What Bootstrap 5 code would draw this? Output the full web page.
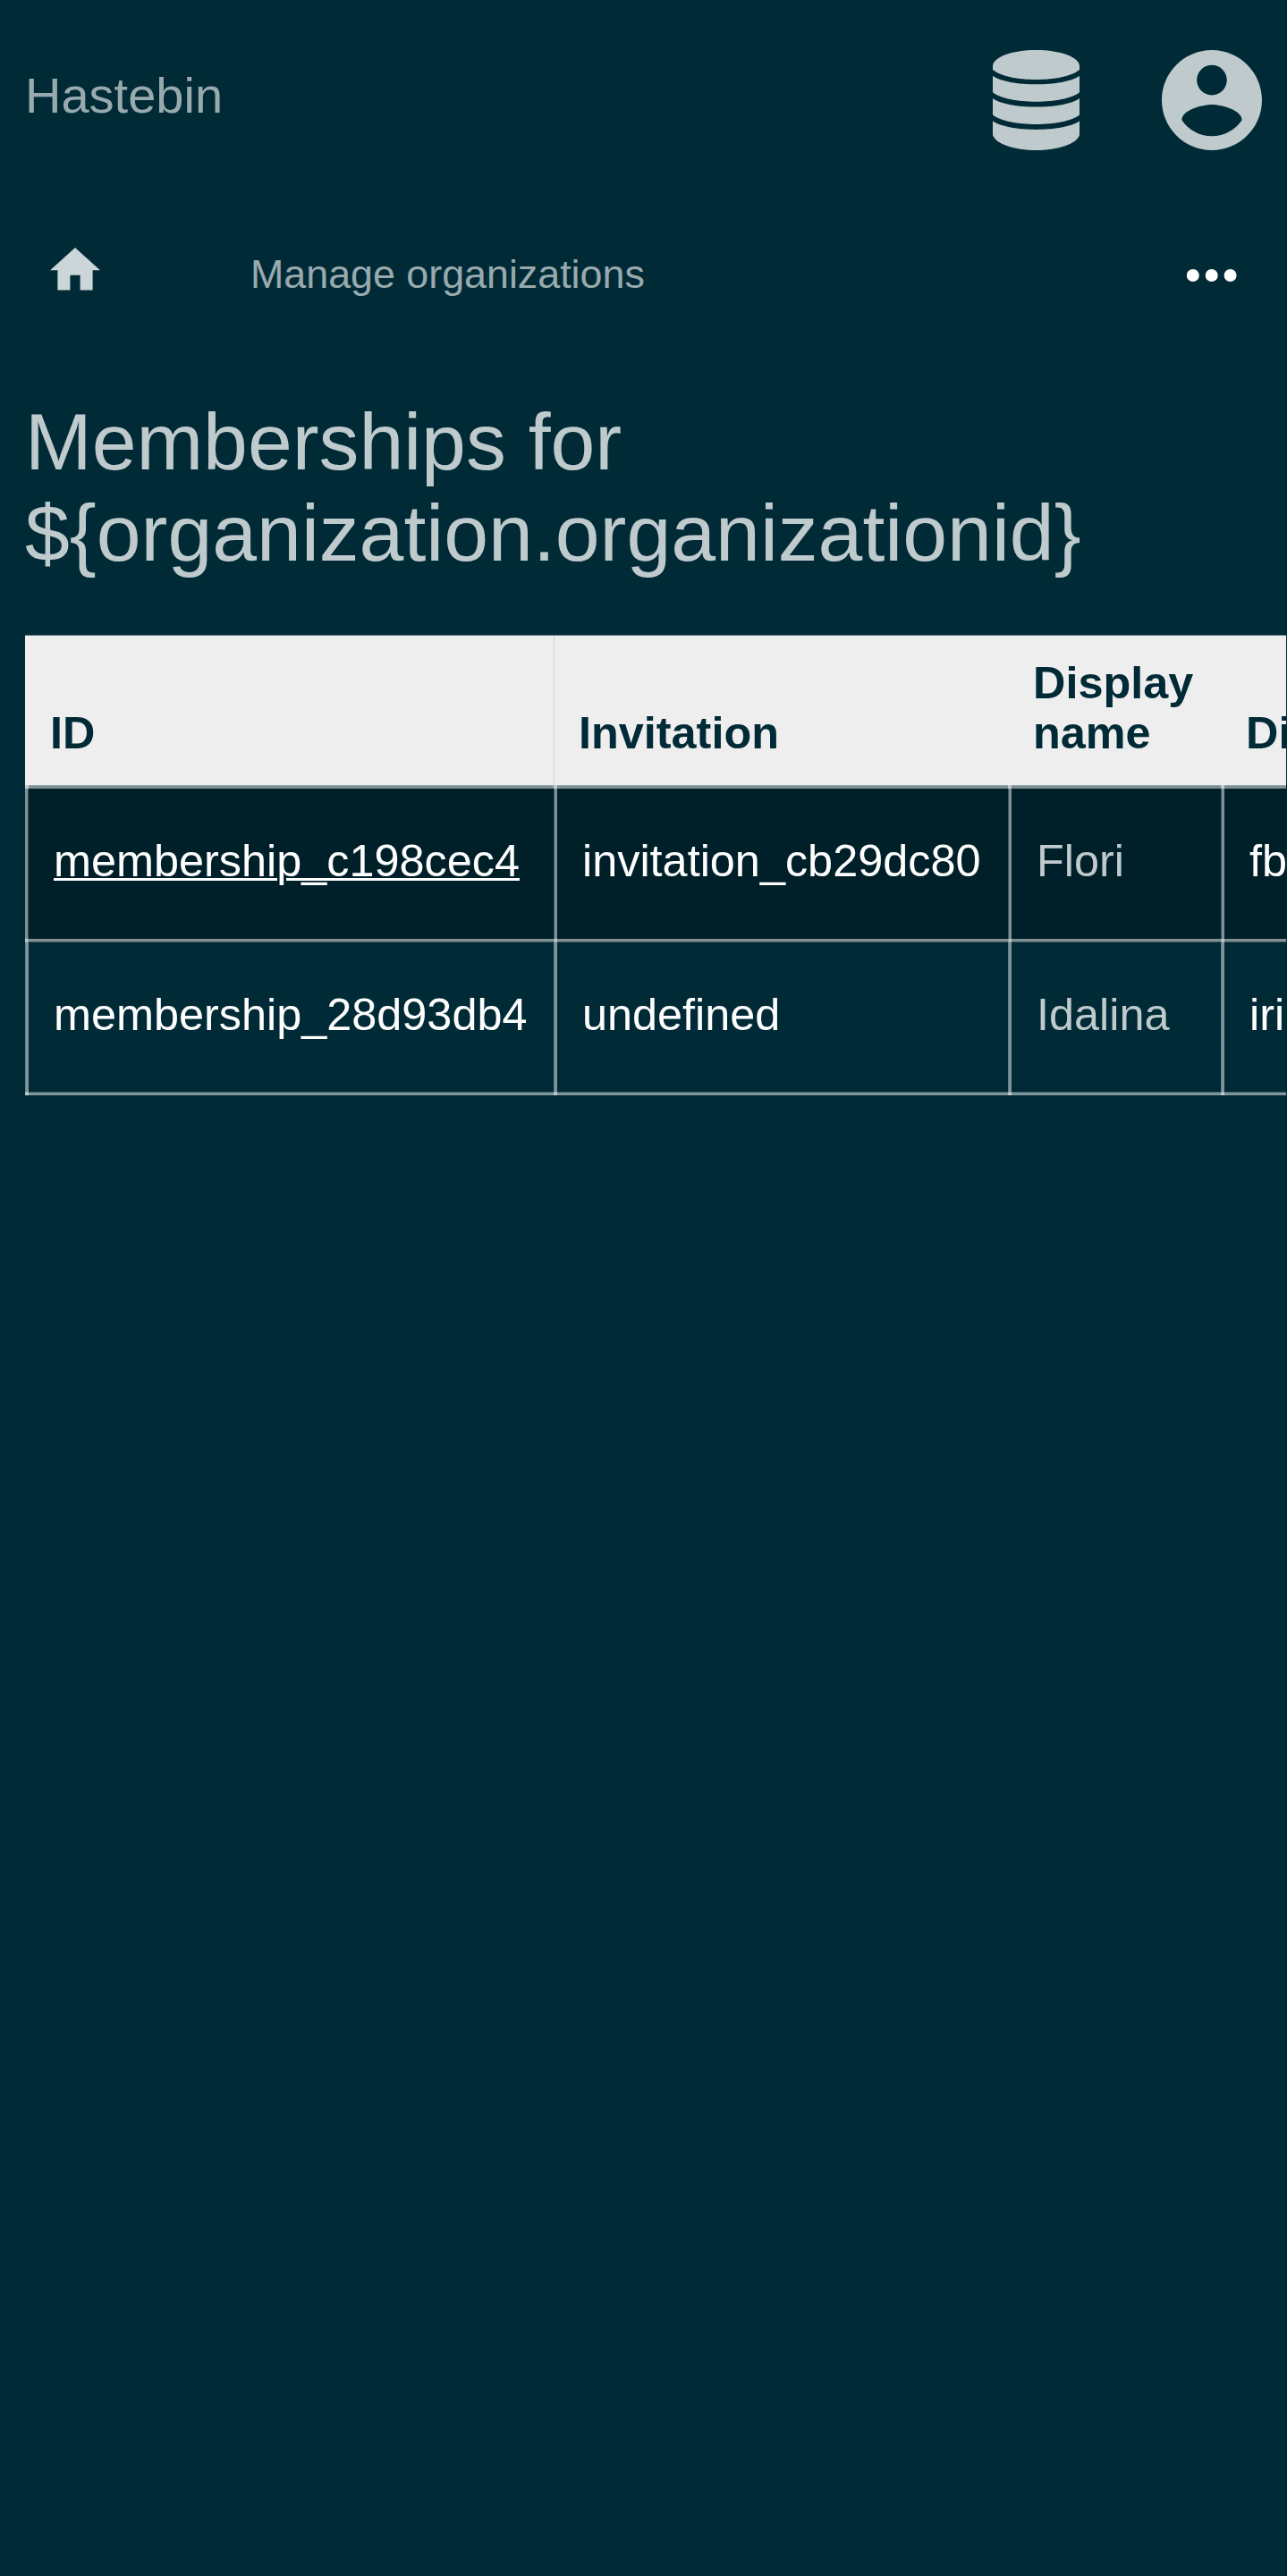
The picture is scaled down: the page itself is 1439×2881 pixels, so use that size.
<!DOCTYPE html>
<html lang="en">
<head>
<meta charset="utf-8">
<meta name="viewport" content="width=device-width, initial-scale=1">
<title>Hastebin</title>
<link href="https://cdn.jsdelivr.net/npm/bootstrap@5.3.0/dist/css/bootstrap.min.css" rel="stylesheet">
<style>
  html, body { overflow: hidden; }
  body { background: #002b36; color: #bfcacd; font-family: "Liberation Sans", Arial, sans-serif; min-height: 2881px; }
  .topbar { height: 224px; padding: 0 28px; }
  .brand-text { font-size: 56px; line-height: 64px; color: #99aaaf; margin-top: -11px; text-decoration: none; }
  .topbar svg { display: block; fill: #bfcacd; }
  .top-icons { gap: 92px; }
  .subnav { height: 168px; padding: 0 56px; }
  .subnav svg { display: block; }
  .home-icon { fill: #ccd5d7; margin-top: -14px; }
  .crumb-link { font-size: 44.8px; line-height: 52px; color: #99aaaf; margin-left: 168px; margin-top: -5px; text-decoration: none; }
  .page-title { font-size: 89.6px; line-height: 102px; font-weight: 400; margin: 51px 28px 63px; color: #bfcacd; }
  .table-wrap { width: 1410px; margin-left: 28px; overflow: hidden; }
  .members { table-layout: fixed; width: 1411px; border-collapse: separate; border-spacing: 0; font-size: 50.4px; line-height: 56px; white-space: nowrap; }
  .members th { height: 168px; padding: 0 0 30px 28px; vertical-align: bottom; background: #eee; color: #002b36; font-weight: 700; }
  .members th:nth-child(2) { box-shadow: inset 1px 0 #d0d3d4; }
  .members thead th { border-top: 1px solid #5d7a81; }
  .members td { height: 172px; padding: 53px 0 0 32px; vertical-align: top; color: #fff;
    /* translucent rules: bottom edge and left edge, brighter where they cross */
    background-image:
      linear-gradient(90deg, rgba(255,255,255,.25) 1px, rgba(255,255,255,.5) 1px, rgba(255,255,255,.5) 4px, transparent 4px),
      linear-gradient(0deg, rgba(255,255,255,.25) 1px, rgba(255,255,255,.5) 1px, rgba(255,255,255,.5) 4px, transparent 4px);
  }
  .members td:first-child { background-image:
      linear-gradient(90deg, rgba(255,255,255,.5) 3px, rgba(255,255,255,.25) 3px, rgba(255,255,255,.25) 4px, transparent 4px),
      linear-gradient(0deg, rgba(255,255,255,.25) 1px, rgba(255,255,255,.5) 1px, rgba(255,255,255,.5) 4px, transparent 4px); }
  .members tbody tr:first-child td { background-color: #002029; }
  .members tbody tr:last-child td { height: 171px;
    background-image:
      linear-gradient(90deg, rgba(255,255,255,.4) 1px, rgba(255,255,255,.5) 1px, rgba(255,255,255,.5) 4px, transparent 4px),
      linear-gradient(0deg, rgba(255,255,255,.5) 3px, rgba(255,255,255,.25) 3px, rgba(255,255,255,.25) 4px, transparent 4px); }
  .members .rule-row th { height: 4px; padding: 0; border: 0; background: #7f9094; box-shadow: inset 0 1px #97a6a9; }
  .members .rule-row th::before { content: ""; display: block; width: 4px; height: 4px; background: rgba(255,255,255,.5); }
  .members td a { color: #fff; text-decoration: none; }
  .members td a.active-link { text-decoration: underline; text-decoration-thickness: 3px; }
  .members td.person { color: #bfcacd; }
</style>
<script src="https://cdn.jsdelivr.net/npm/bootstrap@5.3.0/dist/js/bootstrap.bundle.min.js"></script>
</head>
<body class="m-0">
<header class="topbar d-flex align-items-center justify-content-between">
  <a class="brand-text" href="#">Hastebin</a>
  <div class="top-icons d-flex align-items-center">
    <svg width="97" height="112" viewBox="0 0 97 112" role="img" aria-label="Database">
      <path d="M0 18C0 8 21 0 48.5 0S97 8 97 18V22C80 36.7 17 36.7 0 22Z"/>
      <path d="M0 28.7C17 41.5 80 41.5 97 28.7V47.3C80 61.2 17 61.2 0 47.3Z"/>
      <path d="M0 54C17 66.8 80 66.8 97 54V72.6C80 86.5 17 86.5 0 72.6Z"/>
      <path d="M0 79.3C17 92.1 80 92.1 97 79.3V95C94 105 73 112 48.5 112S3 105 0 95Z"/>
    </svg>
    <svg width="112" height="112" viewBox="2 2 20 20" role="img" aria-label="Account">
      <path d="M12 2C6.48 2 2 6.48 2 12s4.48 10 10 10 10-4.48 10-10S17.52 2 12 2zm0 3c1.66 0 3 1.34 3 3s-1.34 3-3 3-3-1.34-3-3 1.34-3 3-3zm0 14.2c-2.5 0-4.71-1.28-6-3.22.03-1.99 4-3.08 6-3.08 1.99 0 5.97 1.09 6 3.08-1.29 1.94-3.5 3.22-6 3.22z"/>
    </svg>
  </div>
</header>
<nav class="subnav d-flex align-items-center">
  <svg class="home-icon" width="56" height="47.6" viewBox="2 3 20 17" role="img" aria-label="Home"><path d="M10 20v-6h4v6h5v-8h3L12 3 2 12h3v8z"/></svg>
  <a class="crumb-link" href="#">Manage organizations</a>
  <svg class="ms-auto" width="56" height="14" viewBox="0 0 56 14" fill="#fff" role="img" aria-label="More"><circle cx="6.8" cy="7" r="7"/><circle cx="27.7" cy="7" r="7"/><circle cx="48.6" cy="7" r="7"/></svg>
</nav>
<main>
  <h1 class="page-title">Memberships for<br>${organization.organizationid}</h1>
  <div class="table-wrap">
    <table class="members">
      <colgroup><col style="width:591px"><col style="width:508px"><col style="width:238px"><col style="width:74px"></colgroup>
      <thead>
        <tr><th>ID</th><th>Invitation</th><th>Display<br>name</th><th>Di</th></tr>
        <tr class="rule-row" aria-hidden="true"><th></th><th></th><th></th><th></th></tr>
      </thead>
      <tbody>
        <tr><td><a class="active-link" href="#">membership_c198cec4</a></td><td>invitation_cb29dc80</td><td class="person">Flori</td><td>fb</td></tr>
        <tr><td><a href="#">membership_28d93db4</a></td><td>undefined</td><td class="person">Idalina</td><td>irid</td></tr>
      </tbody>
    </table>
  </div>
</main>
</body>
</html>
